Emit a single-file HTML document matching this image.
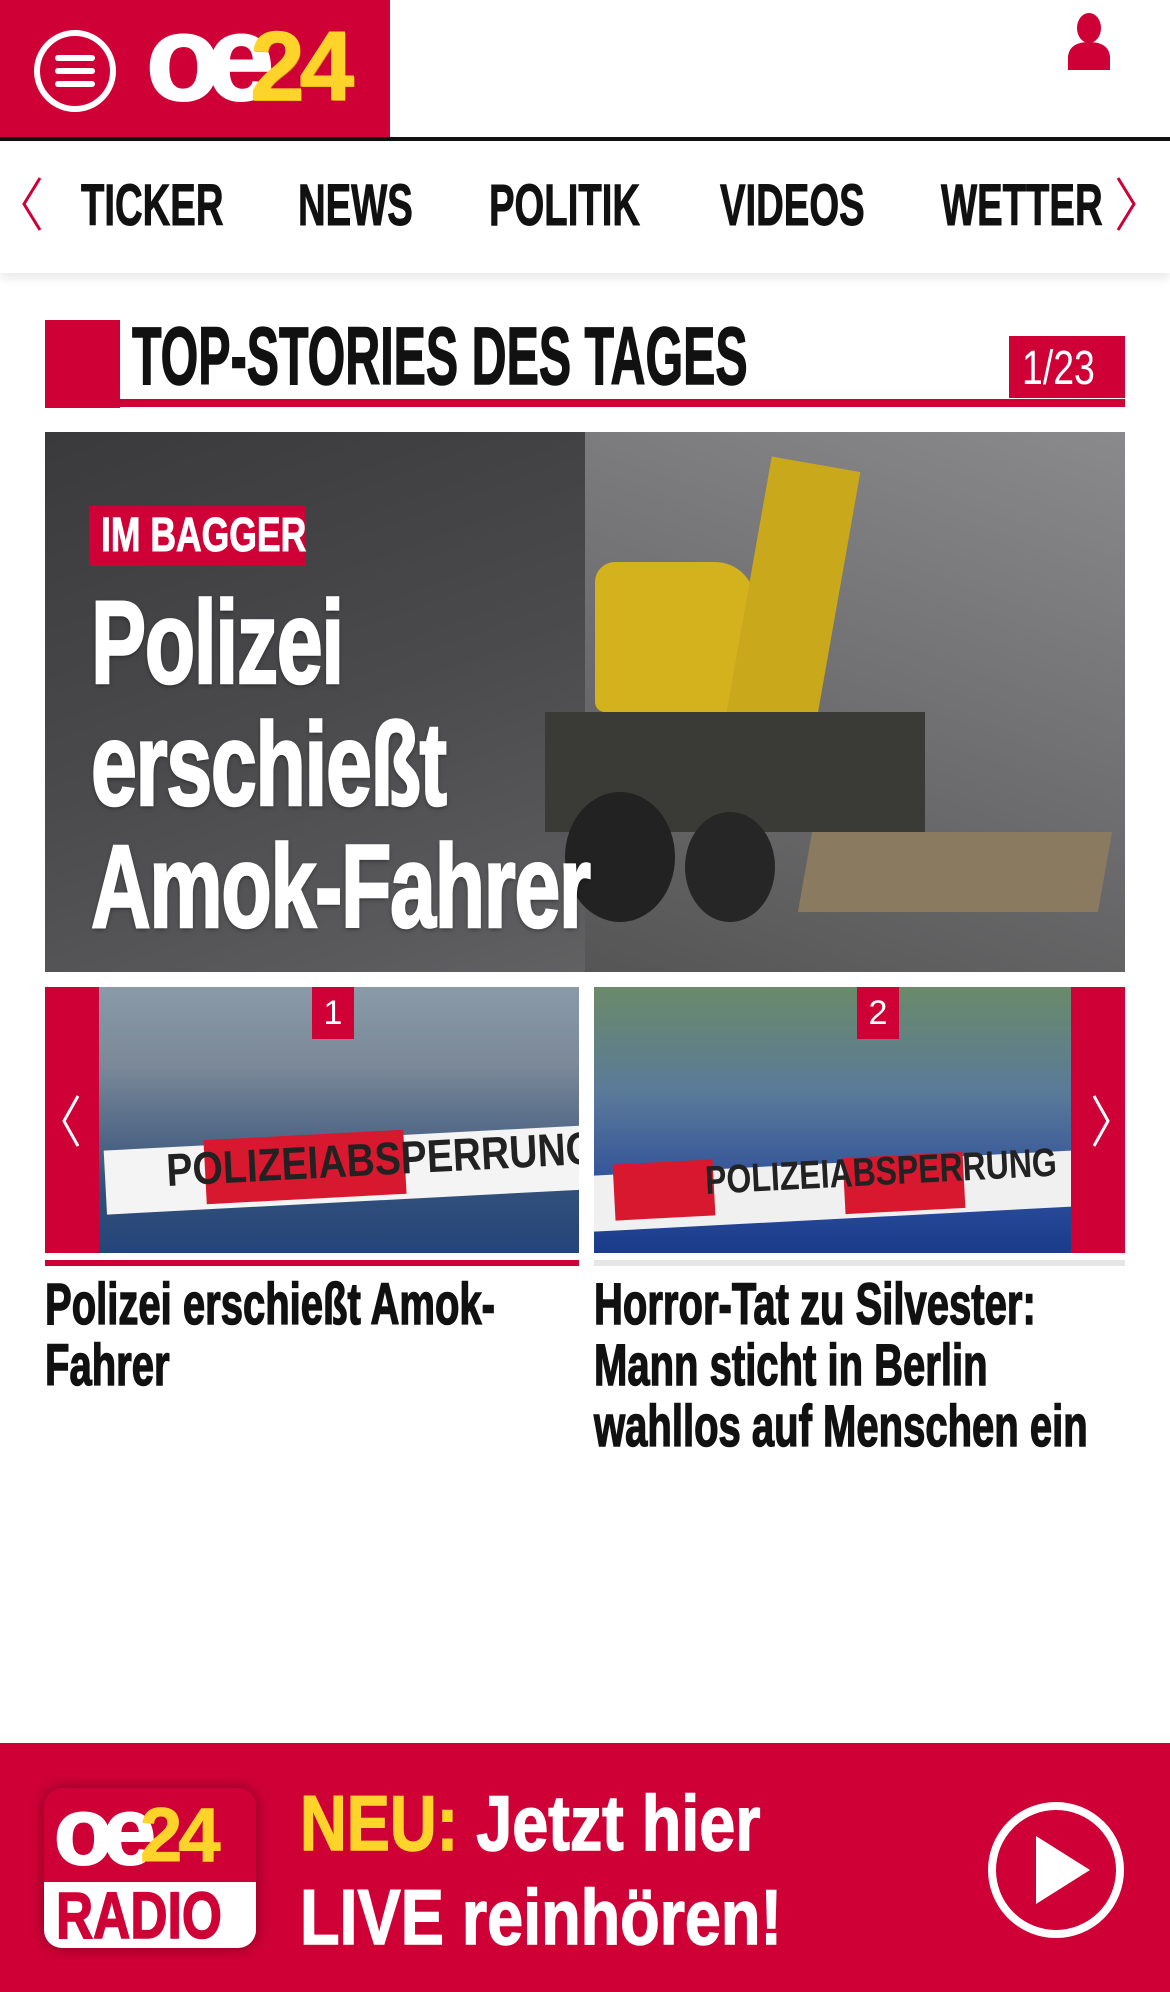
<!DOCTYPE html>
<html><head><meta charset="utf-8"><style>
*{margin:0;padding:0;box-sizing:border-box}
body{width:1170px;height:1992px;background:#fff;position:relative;overflow:hidden;font-family:"Liberation Sans",sans-serif}
.abs{position:absolute}
.red{background:#cf0036}
.sx{transform-origin:left top}
.nav span{position:absolute;top:174px;font-weight:bold;font-size:58px;color:#111;line-height:64px;transform:scaleX(.66);transform-origin:left top;white-space:nowrap;-webkit-text-stroke:1px #111}
</style></head><body>
<div class="abs red" style="left:0;top:0;width:390px;height:138px"></div>
<div class="abs" style="left:0;top:137px;width:1170px;height:4px;background:#111"></div>
<svg class="abs" style="left:30px;top:26px" width="90" height="90" viewBox="0 0 90 90"><circle cx="45" cy="45" r="38" fill="none" stroke="#fff" stroke-width="6"/><rect x="25" y="29" width="40" height="6" rx="3" fill="#fff"/><rect x="25" y="42" width="40" height="6" rx="3" fill="#fff"/><rect x="25" y="55" width="40" height="6" rx="3" fill="#fff"/></svg>
<div class="abs" style="left:146px;top:-2px;font-weight:bold;font-size:122px;letter-spacing:-14px;line-height:120px;color:#fff;white-space:nowrap;-webkit-text-stroke:2px #fff">oe</div>
<div class="abs" style="left:250px;top:14px;font-weight:bold;font-size:98px;letter-spacing:-5px;line-height:104px;color:#ffd42a;text-shadow:1px 1px 0 #e0a000;-webkit-text-stroke:1px #ffd42a">24</div>
<svg class="abs" style="left:1064px;top:12px" width="50" height="58" viewBox="0 0 50 58"><ellipse cx="25" cy="16" rx="12" ry="15" fill="#cf0036"/><path d="M4 58 L4 44 Q6 30 25 30 Q44 30 46 44 L46 58 Z" fill="#cf0036"/></svg>
<div class="abs" style="left:0;top:141px;width:1170px;height:132px;box-shadow:0 6px 8px rgba(0,0,0,.08)"></div>
<div class="nav">
<svg class="abs" style="left:18px;top:176px" width="26" height="56" viewBox="0 0 26 56"><path d="M22 2 L6 28 L22 54" fill="none" stroke="#cf0036" stroke-width="3"/></svg>
<span style="left:81px">TICKER</span><span style="left:298px">NEWS</span><span style="left:489px">POLITIK</span><span style="left:720px">VIDEOS</span><span style="left:941px">WETTER</span>
<svg class="abs" style="left:1114px;top:176px" width="26" height="56" viewBox="0 0 26 56"><path d="M4 2 L20 28 L4 54" fill="none" stroke="#cf0036" stroke-width="3"/></svg>
</div>
<div class="abs red" style="left:45px;top:320px;width:75px;height:88px"></div>
<div class="abs red" style="left:45px;top:399px;width:1080px;height:8px"></div>
<div class="abs sx" style="left:132px;top:314px;font-weight:bold;font-size:82px;line-height:86px;color:#111;white-space:nowrap;transform:scaleX(.59);-webkit-text-stroke:1.5px #111">TOP-STORIES DES TAGES</div>
<div class="abs red" style="left:1009px;top:336px;width:116px;height:62px"></div>
<div class="abs sx" style="left:1022px;top:338px;color:#fff;font-size:48px;line-height:62px;white-space:nowrap;transform:scaleX(.78)">1/23</div>
<div class="abs" style="left:45px;top:432px;width:1080px;height:540px;overflow:hidden;background:linear-gradient(160deg,#3a3a3c 0%,#4a4a4c 40%,#5b5b5d 70%,#707070 100%)">
 <div class="abs" style="left:540px;top:0;width:540px;height:540px;background:linear-gradient(200deg,#8a8a8c,#6a6a6c 60%,#555 100%)"></div>
 <div class="abs" style="left:550px;top:130px;width:160px;height:150px;background:#d4b21e;border-radius:20px 40px 10px 10px"></div>
 <div class="abs" style="left:700px;top:30px;width:90px;height:300px;background:#c9a81c;transform:rotate(10deg)"></div>
 <div class="abs" style="left:500px;top:280px;width:380px;height:120px;background:#3a3a36"></div>
 <div class="abs" style="left:760px;top:400px;width:300px;height:80px;background:#8a7a60;transform:skewX(-10deg)"></div>
 <div class="abs" style="left:520px;top:360px;width:110px;height:130px;background:#222;border-radius:50%"></div>
 <div class="abs" style="left:640px;top:380px;width:90px;height:110px;background:#262626;border-radius:50%"></div>
 <div class="abs red" style="left:44px;top:74px;width:217px;height:60px"></div>
 <div class="abs sx" style="left:56px;top:74px;color:#fff;font-weight:bold;font-size:48px;line-height:60px;white-space:nowrap;transform:scaleX(.74);-webkit-text-stroke:1px #fff">IM BAGGER</div>
 <div class="abs sx" style="left:46px;top:150px;color:#fff;font-weight:bold;font-size:118px;line-height:122px;letter-spacing:-2px;white-space:nowrap;transform:scaleX(.7);-webkit-text-stroke:2.5px #fff;text-shadow:0 2px 6px rgba(0,0,0,.5)">Polizei<br>erschießt<br>Amok-Fahrer</div>
</div>
<div class="abs" style="left:45px;top:987px;width:534px;height:266px;overflow:hidden;background:linear-gradient(180deg,#8a9aa8 0%,#7a8898 30%,#33507a 75%,#24457a 100%)">
 <div class="abs" style="left:60px;top:150px;width:520px;height:64px;background:#f4f4f4;transform:rotate(-3deg)"></div>
 <div class="abs" style="left:160px;top:148px;width:200px;height:64px;background:#d8182e;transform:rotate(-3deg)"></div>
 <div class="abs" style="left:120px;top:156px;font-weight:bold;font-size:46px;color:#222;transform:rotate(-3deg) scaleX(.85);transform-origin:left top;white-space:nowrap">POLIZEIABSPERRUNG</div>
</div>
<div class="abs red" style="left:45px;top:987px;width:54px;height:266px"></div>
<svg class="abs" style="left:58px;top:1094px" width="26" height="54" viewBox="0 0 26 54"><path d="M20 2 L6 27 L20 52" fill="none" stroke="#fff" stroke-width="3"/></svg>
<div class="abs red" style="left:312px;top:987px;width:42px;height:52px;color:#fff;font-size:34px;text-align:center;line-height:52px">1</div>
<div class="abs" style="left:594px;top:987px;width:531px;height:266px;overflow:hidden;background:linear-gradient(180deg,#6a8a6a 0%,#5a7a9a 40%,#2a4a9a 80%,#1a3a8a 100%)">
 <div class="abs" style="left:-20px;top:175px;width:560px;height:56px;background:#f0f0f0;transform:rotate(-3deg)"></div>
 <div class="abs" style="left:20px;top:175px;width:100px;height:56px;background:#d8182e;transform:rotate(-3deg)"></div>
 <div class="abs" style="left:250px;top:168px;width:120px;height:56px;background:#d8182e;transform:rotate(-3deg)"></div>
 <div class="abs" style="left:110px;top:172px;font-weight:bold;font-size:40px;color:#222;transform:rotate(-3deg) scaleX(.8);transform-origin:left top;white-space:nowrap">POLIZEIABSPERRUNG</div>
</div>
<div class="abs red" style="left:1071px;top:987px;width:54px;height:266px"></div>
<svg class="abs" style="left:1088px;top:1094px" width="26" height="54" viewBox="0 0 26 54"><path d="M6 2 L20 27 L6 52" fill="none" stroke="#fff" stroke-width="3"/></svg>
<div class="abs red" style="left:857px;top:987px;width:42px;height:52px;color:#fff;font-size:34px;text-align:center;line-height:52px">2</div>
<div class="abs red" style="left:45px;top:1260px;width:534px;height:6px"></div>
<div class="abs" style="left:594px;top:1260px;width:531px;height:6px;background:#e6e6e6"></div>
<div class="abs sx" style="left:45px;top:1274px;width:774px;font-weight:bold;font-size:58px;line-height:61px;color:#111;transform:scaleX(.69);-webkit-text-stroke:1.5px #111">Polizei erschießt Amok-Fahrer</div>
<div class="abs sx" style="left:594px;top:1274px;width:770px;font-weight:bold;font-size:58px;line-height:61px;color:#111;transform:scaleX(.69);-webkit-text-stroke:1.5px #111">Horror-Tat zu Silvester: Mann sticht in Berlin wahllos auf Menschen ein</div>
<div class="abs red" style="left:0;top:1743px;width:1170px;height:249px"></div>
<div class="abs" style="left:44px;top:1788px;width:212px;height:160px;border-radius:18px;background:#cf0036;box-shadow:0 0 14px rgba(80,0,20,.6);overflow:hidden">
 <div class="abs" style="left:10px;top:-6px;font-weight:bold;font-size:96px;letter-spacing:-10px;line-height:100px;color:#fff;-webkit-text-stroke:2px #fff">oe</div>
 <div class="abs" style="left:96px;top:8px;font-weight:bold;font-size:76px;letter-spacing:-4px;line-height:80px;color:#ffd42a;-webkit-text-stroke:1px #ffd42a">24</div>
 <div class="abs" style="left:0;top:94px;width:212px;height:66px;background:#fff"></div>
 <div class="abs sx" style="left:12px;top:94px;color:#cf0036;font-weight:bold;font-size:66px;line-height:66px;white-space:nowrap;transform:scaleX(.78);-webkit-text-stroke:1.5px #cf0036">RADIO</div>
</div>
<div class="abs sx" style="left:300px;top:1776px;font-weight:bold;font-size:78px;line-height:94px;color:#fff;white-space:nowrap;transform:scaleX(.83);-webkit-text-stroke:1.5px currentColor"><span style="color:#ffd42a">NEU:</span> Jetzt hier<br>LIVE reinhören!</div>
<svg class="abs" style="left:986px;top:1800px" width="140" height="140" viewBox="0 0 140 140"><circle cx="70" cy="70" r="64" fill="none" stroke="#fff" stroke-width="8"/><path d="M50 36 L104 70 L50 104 Z" fill="#fff"/></svg>
</body></html>
